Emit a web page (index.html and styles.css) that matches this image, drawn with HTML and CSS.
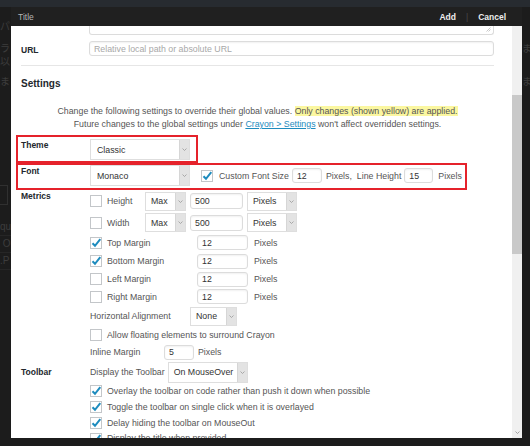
FILE: index.html
```html
<!DOCTYPE html>
<html lang="en">
<head>
<meta charset="utf-8">
<title>Crayon</title>
<link rel="stylesheet" href="styles.css">
</head>
<body>
<div class="adminbar"></div>
<div class="bgpage">
  <div class="bgl l1"><span class="bgleft">パ</span><span></span></div>
  <div class="bgl l2"><span class="bgleft">ラ</span><span class="bgright">ま</span></div>
  <div class="bgl l3"><span class="bgleft">以</span><span></span></div>
  <div class="bgl l4"><span class="bgleft">ま</span><span class="bgright">ま</span></div>
  <div class="bgbox"></div>
  <div class="bgrow"><span>qu</span></div>
  <div class="bgrow"><span>&nbsp;O</span></div>
  <div class="bgrow"><span>.P</span></div>
</div>

<div class="modal">
  <div class="modal-head">
    <span class="title">Title</span>
    <div class="actions"><span>Add</span><span class="sep">|</span><span>Cancel</span></div>
  </div>
  <div class="modal-body">
    <div class="content">
      <div class="textarea-stub">
        <svg class="grip" width="5" height="5" viewBox="0 0 5 5"><path d="M0.5 4.5 L4.5 0.5 M2.5 4.5 L4.5 2.5" stroke="#bbb" stroke-width="0.8"/></svg>
      </div>
      <div class="url-row">
        <div class="lbl url-lbl">URL</div>
        <div class="inp url-inp">Relative local path or absolute URL</div>
      </div>
      <div class="rule"></div>
      <h2 class="heading">Settings</h2>
      <p class="desc">Change the following settings to override their global values. <span class="hl">Only changes (shown yellow) are applied.</span><br>Future changes to the global settings under <a class="link" href="#">Crayon &gt; Settings</a> won't affect overridden settings.</p>

      <div class="sect theme-row">
        <div class="lbl lbl-theme">Theme</div>
        <div class="ctrls">
          <span class="sel s-theme"><span class="st">Classic</span><span class="sa"><svg width="5" height="3" viewBox="0 0 5 3"><path d="M0.5 0.5 L2.5 2.5 L4.5 0.5" fill="none" stroke="#999" stroke-width="0.8"/></svg></span></span>
        </div>
      </div>

      <div class="sect font-row">
        <div class="lbl lbl-font">Font</div>
        <div class="ctrls line">
          <span class="sel s-theme"><span class="st">Monaco</span><span class="sa"><svg width="5" height="3" viewBox="0 0 5 3"><path d="M0.5 0.5 L2.5 2.5 L4.5 0.5" fill="none" stroke="#999" stroke-width="0.8"/></svg></span></span>
          <span class="cb on cb-font"><svg width="12" height="12" viewBox="0 0 12 12"><path d="M2.5 6.2 L5 8.8 L10.3 2.2" fill="none" stroke="#1e8cbe" stroke-width="2"/></svg></span>
          <span class="t">Custom Font Size</span>
          <span class="inp i-fs">12</span>
          <span class="t t-px1">Pixels,</span>
          <span class="t t-lh">Line Height</span>
          <span class="inp i-lh">15</span>
          <span class="t t-px2">Pixels</span>
        </div>
      </div>

      <div class="sect metrics">
        <div class="lbl lbl-metrics">Metrics</div>
        <div class="ctrls">
          <div class="line h22">
            <span class="cb"></span><span class="t w38">Height</span>
            <span class="sel s-max"><span class="st">Max</span><span class="sa"><svg width="5" height="3" viewBox="0 0 5 3"><path d="M0.5 0.5 L2.5 2.5 L4.5 0.5" fill="none" stroke="#999" stroke-width="0.8"/></svg></span></span>
            <span class="inp i-500">500</span>
            <span class="sel s-px"><span class="st">Pixels</span><span class="sa"><svg width="5" height="3" viewBox="0 0 5 3"><path d="M0.5 0.5 L2.5 2.5 L4.5 0.5" fill="none" stroke="#999" stroke-width="0.8"/></svg></span></span>
          </div>
          <div class="line h21">
            <span class="cb"></span><span class="t w38">Width</span>
            <span class="sel s-max"><span class="st">Max</span><span class="sa"><svg width="5" height="3" viewBox="0 0 5 3"><path d="M0.5 0.5 L2.5 2.5 L4.5 0.5" fill="none" stroke="#999" stroke-width="0.8"/></svg></span></span>
            <span class="inp i-500">500</span>
            <span class="sel s-px"><span class="st">Pixels</span><span class="sa"><svg width="5" height="3" viewBox="0 0 5 3"><path d="M0.5 0.5 L2.5 2.5 L4.5 0.5" fill="none" stroke="#999" stroke-width="0.8"/></svg></span></span>
          </div>
          <div class="line h19">
            <span class="cb on"><svg width="12" height="12" viewBox="0 0 12 12"><path d="M2.5 6.2 L5 8.8 L10.3 2.2" fill="none" stroke="#1e8cbe" stroke-width="2"/></svg></span><span class="t w90">Top Margin</span>
            <span class="inp i-m">12</span><span class="t t-mpx">Pixels</span>
          </div>
          <div class="line h18">
            <span class="cb on"><svg width="12" height="12" viewBox="0 0 12 12"><path d="M2.5 6.2 L5 8.8 L10.3 2.2" fill="none" stroke="#1e8cbe" stroke-width="2"/></svg></span><span class="t w90">Bottom Margin</span>
            <span class="inp i-m">12</span><span class="t t-mpx">Pixels</span>
          </div>
          <div class="line h18">
            <span class="cb"></span><span class="t w90">Left Margin</span>
            <span class="inp i-m">12</span><span class="t t-mpx">Pixels</span>
          </div>
          <div class="line h17">
            <span class="cb"></span><span class="t w90">Right Margin</span>
            <span class="inp i-m">12</span><span class="t t-mpx">Pixels</span>
          </div>
          <div class="line h22">
            <span class="t w100">Horizontal Alignment</span>
            <span class="sel s-none"><span class="st">None</span><span class="sa"><svg width="5" height="3" viewBox="0 0 5 3"><path d="M0.5 0.5 L2.5 2.5 L4.5 0.5" fill="none" stroke="#999" stroke-width="0.8"/></svg></span></span>
          </div>
          <div class="line h16">
            <span class="cb"></span><span class="t">Allow floating elements to surround Crayon</span>
          </div>
          <div class="line h18">
            <span class="t w74">Inline Margin</span>
            <span class="inp i-in">5</span><span class="t t-ipx">Pixels</span>
          </div>
        </div>
      </div>

      <div class="sect toolbar">
        <div class="lbl lbl-toolbar">Toolbar</div>
        <div class="ctrls">
          <div class="line h22">
            <span class="t">Display the Toolbar</span>
            <span class="sel s-disp"><span class="st">On MouseOver</span><span class="sa"><svg width="5" height="3" viewBox="0 0 5 3"><path d="M0.5 0.5 L2.5 2.5 L4.5 0.5" fill="none" stroke="#999" stroke-width="0.8"/></svg></span></span>
          </div>
          <div class="line h16">
            <span class="cb on"><svg width="12" height="12" viewBox="0 0 12 12"><path d="M2.5 6.2 L5 8.8 L10.3 2.2" fill="none" stroke="#1e8cbe" stroke-width="2"/></svg></span><span class="t">Overlay the toolbar on code rather than push it down when possible</span>
          </div>
          <div class="line h16">
            <span class="cb on"><svg width="12" height="12" viewBox="0 0 12 12"><path d="M2.5 6.2 L5 8.8 L10.3 2.2" fill="none" stroke="#1e8cbe" stroke-width="2"/></svg></span><span class="t">Toggle the toolbar on single click when it is overlayed</span>
          </div>
          <div class="line h16">
            <span class="cb on"><svg width="12" height="12" viewBox="0 0 12 12"><path d="M2.5 6.2 L5 8.8 L10.3 2.2" fill="none" stroke="#1e8cbe" stroke-width="2"/></svg></span><span class="t">Delay hiding the toolbar on MouseOut</span>
          </div>
          <div class="line h16 last">
            <span class="cb on"><svg width="12" height="12" viewBox="0 0 12 12"><path d="M2.5 6.2 L5 8.8 L10.3 2.2" fill="none" stroke="#1e8cbe" stroke-width="2"/></svg></span><span class="t">Display the title when provided</span>
          </div>
        </div>
      </div>
    </div>
    <div class="scrollbar">
      <div class="thumb"></div>
      <svg class="sb-down" width="5" height="3" viewBox="0 0 5 3"><path d="M0.5 0.5 L2.5 2.5 L4.5 0.5" fill="none" stroke="#999" stroke-width="0.9"/></svg>
    </div>
  </div>
</div>
</body>
</html>
```

FILE: styles.css
```css
* { box-sizing: border-box; margin: 0; padding: 0; }
html, body { width: 530px; height: 446px; overflow: hidden; }
body {
  background: #1c1c1c;
  font-family: "Liberation Sans", Arial, sans-serif;
  font-size: 8.8px;
  color: #555;
  position: relative;
}

/* background page behind the dialog */
.adminbar { height: 7px; background: #272b30; }
.bgpage {
  color: #3c3c3c;
  font-family: "Noto Sans CJK JP", "Noto Sans", sans-serif;
  font-size: 10px;
  line-height: 12px;
}
.bgl { display: flex; justify-content: space-between; height: 12px; overflow: hidden; }
.bgleft { width: 11px; overflow: hidden; white-space: nowrap; }
.bgright { width: 8px; overflow: hidden; white-space: nowrap; }
.l1 { margin-top: 13px; }
.l2 { margin-top: 10px; }
.l3 { margin-top: 1px; }
.l4 { margin-top: 8px; }
.bgbox {
  margin-top: 98px;
  width: 8px;
  height: 20px;
  border: 1px solid #303030;
  border-left: 0;
}
.bgrow {
  height: 17px;
  border-bottom: 1px solid #262626;
  width: 11px;
  overflow: hidden;
  font-family: "Liberation Sans", Arial, sans-serif;
  display: flex;
  align-items: center;
  white-space: nowrap;
}
.bgbox + .bgrow { margin-top: 14px; }

/* dialog */
.modal {
  position: absolute;
  left: 11px;
  top: 7px;
  width: 511px;
  height: 431px;
  background: #fff;
  display: flex;
  flex-direction: column;
}
.modal-head {
  height: 19px;
  background: #202020;
  display: flex;
  align-items: center;
  justify-content: space-between;
  padding: 0 16px 0 7px;
  flex: none;
}
.title { color: #b5b5b5; font-size: 8.5px; }
.actions { display: flex; align-items: center; color: #eee; font-weight: bold; font-size: 8.5px; }
.sep { color: #4a4a4a; font-weight: normal; margin: 0 10px; }

.modal-body { flex: 1; display: flex; overflow: hidden; }
.content { flex: 1; padding: 0 18px 0 10px; overflow: hidden; }

.scrollbar {
  width: 10px;
  background: #f0f0f0;
  display: flex;
  flex-direction: column;
  align-items: center;
  flex: none;
}
.thumb { width: 10px; height: 159px; margin-top: 69px; background: #c9c9c9; }
.sb-down { margin-top: auto; margin-bottom: 4px; }

/* top fields */
.textarea-stub {
  margin-left: 68px;
  height: 9px;
  border: 1px solid #dcdcdc;
  border-top: 0;
  border-radius: 0 0 3px 3px;
  display: flex;
  justify-content: flex-end;
  align-items: flex-end;
  padding: 0 2px 2px 0;
}
.url-row { display: grid; grid-template-columns: 68px 1fr; margin-top: 6px; height: 15px; }
.lbl { color: #23282d; font-weight: bold; font-size: 8.5px; line-height: 13px; }
.url-lbl { padding-top: 3px; }

.rule { margin-top: 9px; border-top: 1px solid #e6e6e6; }
.heading { margin-top: 10px; font-size: 10px; line-height: 16px; color: #23282d; font-weight: bold; }
.desc { margin-top: 13px; text-align: center; line-height: 13px; color: #555; }
.hl { background: #fbf7a0; }
.link { color: #1e8cbe; text-decoration: underline; }

/* settings sections */
.sect { display: grid; grid-template-columns: 69px 1fr; }
.ctrls { display: flex; flex-direction: column; }
.line { display: flex; flex-direction: row; align-items: center; white-space: nowrap; }

.theme-row {
  margin-top: 4px;
  margin-left: -5px;
  width: 182px;
  height: 28px;
  border: 2px solid #e5222b;
  padding-left: 3px;
}
.lbl-theme { padding-top: 2px; }
.theme-row .sel { margin-top: 2px; }

.font-row {
  margin-left: -5px;
  width: 451px;
  height: 27px;
  border: 2px solid #e5222b;
  padding-left: 3px;
}
.lbl-font { padding-top: 0; }
.font-row .line { align-items: center; height: 21px; }

.lbl-metrics { padding-top: 0; }
.lbl-toolbar { padding-top: 5px; }

.h22 { height: 22px; }
.h21 { height: 21px; }
.h19 { height: 19px; }
.h18 { height: 18px; }
.h17 { height: 17px; }
.h16 { height: 16px; }
.last { height: 12px; overflow: hidden; align-items: flex-start; padding-top: 2px; }

.t { color: #555; }
.w38 { width: 38px; }
.w74 { width: 74px; }
.w90 { width: 90px; }
.w100 { width: 100px; }

/* checkbox */
.cb {
  width: 12px;
  height: 12px;
  border: 1px solid #c3c6c9;
  background: #fff;
  margin-right: 5px;
  flex: none;
  position: relative;
  display: flex;
  align-items: center;
  justify-content: center;
}
.cb svg { position: absolute; left: -1px; top: -1px; }
.cb-font { margin-left: 11px; margin-right: 6px; }

/* select */
.sel {
  display: flex;
  height: 20px;
  border: 1px solid #dedede;
  background: #fff;
  flex: none;
}
.st { flex: 1; display: flex; align-items: center; padding-left: 5px; color: #333; }
.sa {
  width: 10px;
  background: #e3e3e3;
  border-left: 1px solid #d6d6d6;
  display: flex;
  align-items: center;
  justify-content: center;
}
.s-theme { width: 100px; height: 21px; }
.s-theme .st { padding-left: 6px; }
.s-max { width: 41px; height: 19px; margin-right: 4px; }
.s-px { width: 50px; height: 19px; margin-left: 4px; }
.s-none { width: 47px; height: 19px; }
.s-disp { width: 80px; height: 21px; margin-left: 3px; }

/* text inputs */
.inp {
  height: 15px;
  border: 1px solid #dcdcdc;
  border-radius: 3px;
  padding-left: 4px;
  display: flex;
  align-items: center;
  color: #333;
  background: #fff;
  box-shadow: inset 0 1px 2px rgba(0, 0, 0, 0.06);
  flex: none;
}
.url-row .url-inp { color: #a8a8a8; height: 15px; padding-left: 4px; }
.i-fs { width: 30px; margin-left: 3px; }
.t-px1 { margin-left: 4px; }
.t-lh { margin-left: 5px; }
.i-lh { width: 29px; margin-left: 3px; }
.t-px2 { margin-left: 5px; }
.i-500 { width: 53px; height: 16px; }
.i-m { width: 51px; }
.t-mpx { margin-left: 6px; }
.i-in { width: 30px; }
.t-ipx { margin-left: 4px; }
```
